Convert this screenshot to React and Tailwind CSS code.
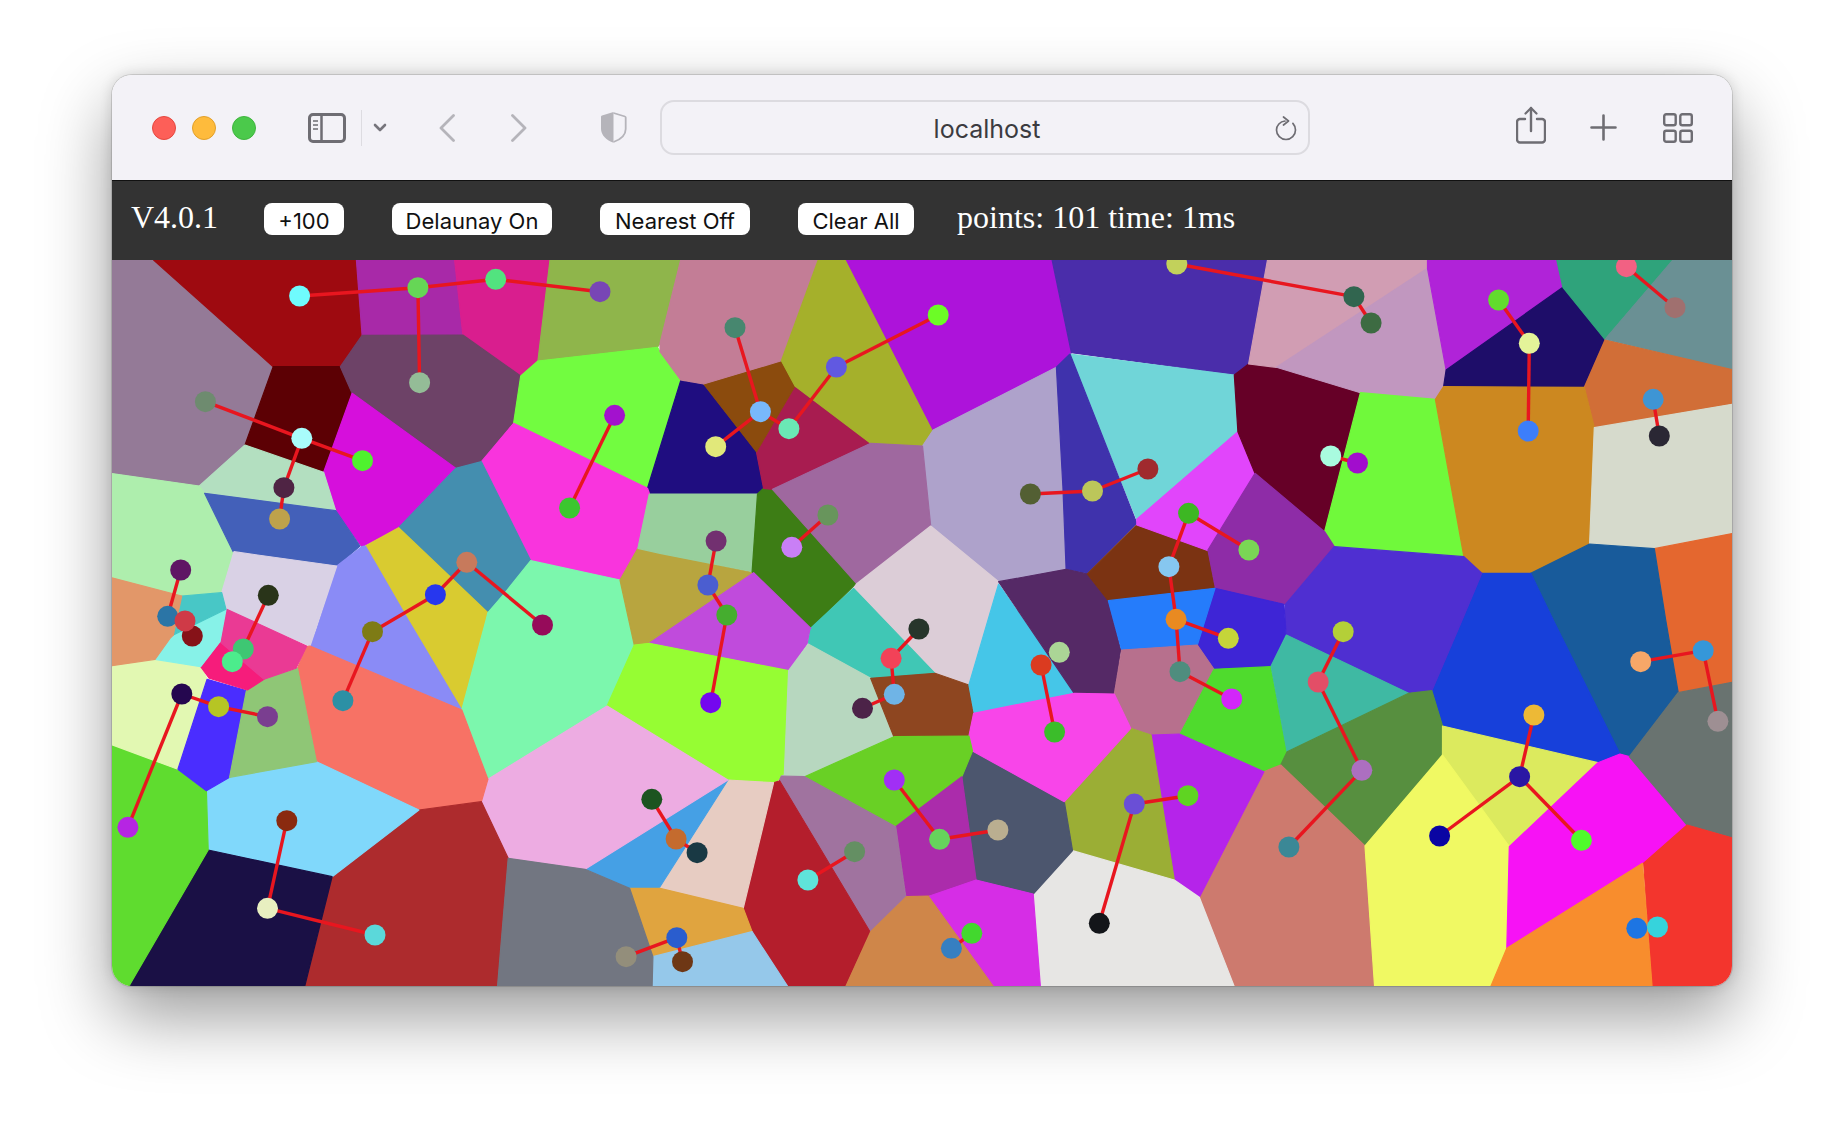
import React from "react";

// Coordinates below were read off crops of the picture: origin x, origin y, scale x, scale y
const CROPS = {
  A: [110, 260, 2.8, 3],
  B: [660, 260, 2.8, 3],
  C: [1180, 260, 2.8, 3],
  D: [110, 620, 2.8, 3],
  E: [660, 620, 2.8, 3],
  F: [1180, 620, 2.8, 3],
  G: [110, 540, 3, 3],
  H: [1080, 560, 3, 3],
};
const CANVAS_X = 112;
const CANVAS_Y = 260;

// ['A', x, y, x, y, 'B', x, y] => [[x, y], ...] in canvas pixels
const toPoints = (list) => {
  const out = [];
  let crop = CROPS.A;
  for (let i = 0; i < list.length; i++) {
    if (typeof list[i] === "string") {
      crop = CROPS[list[i]];
    } else {
      out.push([
        +(crop[0] + list[i] / crop[2] - CANVAS_X).toFixed(1),
        +(crop[1] + list[i + 1] / crop[3] - CANVAS_Y).toFixed(1),
      ]);
      i++;
    }
  }
  return out;
};

const CELLS = [
  ["#947a97", ["A", 0, 0, 122, 0, 457, 320, 378, 555, 250, 678, 0, 640]],
  ["#9e0a10", ["A", 122, 0, 690, 0, 706, 226, 645, 320, 457, 320]],
  ["#a829a8", ["A", 690, 0, 965, 0, 988, 225, 706, 226]],
  ["#d91e8e", ["A", 965, 0, 1232, 0, 1198, 303, 1150, 348, 988, 225]],
  ["#8fb54b", ["A", 1232, 0, "B", 58, 0, 0, 250, "A", 1533, 262, 1198, 303]],
  ["#5c0004", ["A", 457, 320, 645, 320, 678, 400, 598, 637, 378, 555]],
  ["#6d4267", ["A", 706, 226, 988, 225, 1150, 348, 1130, 490, 1040, 605, 968, 625, 678, 400, 645, 320]],
  ["#72fc40", ["A", 1150, 348, 1198, 303, 1533, 262, "B", 0, 275, 58, 360, "A", 1505, 685, 1130, 490]],
  ["#1f0d80", ["B", 58, 362, 122, 372, 270, 575, 290, 685, 273, 702, "A", 1505, 702, 1505, 685]],
  ["#d60fdc", ["A", 678, 400, 968, 625, 808, 803, 705, 860, 632, 752, 598, 637]],
  ["#f934dd", ["A", 1130, 490, 1505, 685, 1510, 700, 1478, 865, 1428, 960, 1178, 902, 1040, 605]],
  ["#b3dfc0", ["A", 378, 555, 598, 637, 632, 752, 265, 700, 250, 678]],
  ["#aeeead", ["A", 0, 640, 250, 678, 265, 700, 345, 875, 315, 998, 200, 1008, 0, 952]],
  ["#4360b9", ["A", 265, 700, 632, 752, 700, 858, 635, 918, 345, 875]],
  ["#448eaf", ["A", 968, 625, 1040, 605, 1178, 902, 1105, 1000, 1058, 1058, 808, 803]],
  ["#d9cb30", ["A", 715, 858, 808, 803, 1058, 1058, "D", 1053, 0, 985, 270, 835, 0]],
  ["#8a8bf6", ["A", 705, 860, 715, 858, "D", 835, 0, 985, 270, 560, 78, 578, 30, "A", 635, 918]],
  ["#d9d1e5", ["G", 372, 35, 680, 78, 600, 318, 350, 208, 335, 158]],
  ["#7cf7ad", ["A", 1058, 1058, 1105, 1000, 1178, 902, 1428, 960, "D", 1468, 75, 1392, 258, 1058, 478, 985, 270, 1053, 0]],
  ["#b8a53f", ["A", 1478, 865, "B", 0, 880, 262, 938, "D", 1510, 70, 1468, 75, "A", 1428, 960]],
  ["#98cf9d", ["A", 1510, 702, "B", 273, 702, 260, 935, 0, 880, "A", 1478, 865]],
  ["#3d7d15", ["B", 273, 702, 290, 685, 315, 688, 550, 970, 422, 1105, 262, 945, 258, 935]],
  ["#a81c50", ["B", 378, 378, 590, 550, 315, 688, 290, 685, 270, 575]],
  ["#8b4b0d", ["B", 122, 372, 340, 302, 378, 378, 270, 575]],
  ["#c37d96", ["B", 58, 0, 443, 0, 340, 302, 122, 372, 58, 360, 0, 275, 0, 250]],
  ["#a5b02b", ["B", 443, 0, 522, 0, 765, 510, 735, 558, 590, 550, 378, 378, 340, 302]],
  ["#ad13da", ["B", 522, 0, 1098, 0, 1152, 278, 1110, 322, 765, 510]],
  ["#4a2daa", ["B", 1098, 0, "C", 245, 0, 192, 312, 152, 345, 0, 322, "B", 1152, 278]],
  ["#70d5d8", ["B", 1148, 282, "C", 152, 345, 162, 515, "B", 1335, 778]],
  ["#aea2cb", ["B", 1110, 322, 1115, 330, 1128, 680, 1137, 928, 948, 965, 758, 798, 735, 558, 765, 510]],
  ["#3f32ac", ["B", 1110, 322, 1148, 282, 1335, 790, 1195, 940, 1137, 928, 1128, 680]],
  ["#9f689f", ["B", 315, 688, 590, 550, 735, 558, 758, 798, 550, 970]],
  ["#dccdd7", ["B", 542, 985, 550, 972, 758, 798, 948, 965, "E", 865, 192, 770, 160]],
  ["#40c7b5", ["B", 542, 985, "E", 770, 160, 590, 175, 415, 72, 420, 25, "B", 422, 1105]],
  ["#c04bdc", ["B", 262, 938, 422, 1105, "E", 420, 25, 412, 72, 360, 152, "D", 1510, 70]],
  ["#96fd33", ["D", 1468, 75, 1510, 70, "E", 360, 152, 348, 465, 320, 488, 190, 480, "D", 1392, 258]],
  ["#b7d7bf", ["E", 360, 152, 415, 72, 590, 175, 655, 350, 405, 470, 340, 468, 348, 465]],
  ["#8e4620", ["E", 590, 175, 770, 160, 865, 195, 878, 280, 865, 348, 655, 350]],
  ["#45c6e8", ["B", 948, 972, "E", 1160, 220, 880, 280, 865, 195]],
  ["#552966", ["B", 948, 965, 1137, 928, "H", 22, 42, 85, 122, 122, 270, 102, 402, "E", 1160, 220]],
  ["#7b3312", ["H", 22, 42, 85, 122, 405, 85, "B", 1535, 872, 1335, 795]],
  ["#e145fb", ["B", 1335, 778, "C", 162, 515, 210, 640, 78, 870, "B", 1535, 872, 1335, 795]],
  ["#660027", ["C", 152, 345, 192, 312, 270, 322, 505, 398, 405, 815, 210, 640, 162, 515]],
  ["#d19db3", ["C", 245, 0, 693, 0, 693, 25, 270, 322, 192, 312]],
  ["#c197bf", ["C", 693, 25, 745, 330, 738, 380, 715, 418, 505, 398, 270, 322]],
  ["#70f93b", ["C", 505, 398, 715, 418, 795, 890, 432, 860, 405, 815]],
  ["#8e2ca7", ["C", 210, 640, 405, 815, 432, 860, 295, 1033, 100, 988, 78, 870]],
  ["#b023d8", ["C", 693, 0, 1055, 0, 1072, 82, 745, 330, 693, 25]],
  ["#1e0d69", ["C", 1072, 82, 1190, 238, 1132, 380, 738, 380, 745, 330]],
  ["#2fa37b", ["C", 1055, 0, 1380, 0, 1190, 238, 1072, 82]],
  ["#6a9094", ["C", 1380, 0, 1550, 0, 1550, 332, 1190, 238]],
  ["#d16e37", ["C", 1190, 240, 1550, 330, 1550, 432, 1160, 503, 1132, 382]],
  ["#cc8820", ["C", 738, 380, 1132, 382, 1160, 503, 1147, 852, 982, 940, 845, 940, 795, 890, 715, 418]],
  ["#d6dacc", ["C", 1160, 503, 1550, 432, 1550, 820, 1328, 866, 1147, 852]],
  ["#e4672f", ["C", 1328, 866, 1550, 820, "F", 1550, 186, 1395, 218, 1360, 0]],
  ["#185b9b", ["C", 982, 940, 1147, 852, 1328, 866, "F", 1360, 0, 1395, 218, 1258, 410, 1232, 402, 1045, 0]],
  ["#1740da", ["C", 845, 940, 982, 940, "F", 1045, 0, 1232, 402, 1170, 428, 735, 318, 705, 212, 790, 0]],
  ["#4f2fd1", ["C", 432, 860, 795, 890, 845, 940, "F", 790, 0, 705, 212, 640, 220, 298, 45, 295, 0, "C", 295, 1033]],
  ["#3e25d6", ["H", 405, 85, 612, 133, 618, 222, 572, 320, 402, 328, 352, 255]],
  ["#257cfb", ["H", 85, 122, 405, 85, 352, 255, 125, 270]],
  ["#b7708d", ["H", 125, 270, 352, 255, 402, 328, "E", 1455, 342, 1375, 345, 1318, 325, 1272, 222]],
  ["#4fdb2d", ["H", 402, 328, 572, 320, "F", 300, 395, 282, 435, 235, 455, 0, 343]],
  ["#3fb9a3", ["F", 298, 45, 640, 220, 300, 395, 255, 138]],
  ["#578f3f", ["F", 300, 395, 640, 220, 705, 212, 735, 318, 733, 405, 518, 678, 282, 435]],
  ["#cd7a6e", ["F", 235, 455, 282, 435, 518, 678, 545, 1100, 152, 1100, 55, 830]],
  ["#dcea5e", ["F", 735, 318, 1170, 428, 922, 680, 735, 405]],
  ["#f0f963", ["F", 735, 405, 922, 680, 915, 985, 870, 1100, 545, 1100, 518, 678]],
  ["#f712f5", ["F", 922, 680, 1170, 428, 1232, 402, 1258, 410, 1420, 615, 1295, 730, 915, 985]],
  ["#697370", ["F", 1258, 410, 1395, 218, 1550, 186, 1550, 655, 1420, 615]],
  ["#f3352d", ["F", 1420, 615, 1550, 655, 1550, 1100, 1322, 1100, 1298, 730]],
  ["#f88d2d", ["F", 915, 985, 1295, 730, 1322, 1100, 870, 1100]],
  ["#b524ea", ["E", 1375, 345, 1455, 342, "F", 0, 343, 235, 455, 55, 830, "E", 1440, 780]],
  ["#9bae35", ["E", 1318, 325, 1375, 345, 1440, 780, 1155, 692, 1132, 545]],
  ["#e7e6e4", ["E", 1155, 692, 1440, 780, 1510, 832, "F", 152, 1100, "E", 1065, 1100, 1045, 822]],
  ["#4c566e", ["E", 875, 393, 1132, 545, 1155, 692, 1045, 822, 885, 780, 845, 470]],
  ["#f845e9", ["E", 878, 280, 1160, 220, 1272, 222, 1318, 325, 1132, 545, 875, 393, 865, 348]],
  ["#69d025", ["E", 405, 470, 655, 350, 865, 348, 875, 393, 845, 470, 660, 620]],
  ["#ab2cab", ["E", 845, 470, 885, 780, 755, 828, 690, 830, 660, 620]],
  ["#a0739f", ["E", 340, 468, 405, 470, 660, 620, 688, 830, 590, 935, 335, 480]],
  ["#b41e2c", ["E", 335, 482, 588, 935, 520, 1100, 358, 1100, 258, 935, 233, 865, 318, 488]],
  ["#e7ccc2", ["E", 190, 480, 318, 488, 233, 865, 0, 805]],
  ["#45a0e5", ["E", 190, 480, 0, 800, "D", 1535, 805, 1455, 805, 1330, 748]],
  ["#e0a43f", ["D", 1455, 805, "E", 0, 805, 233, 865, 258, 935, "D", 1520, 1010]],
  ["#95c8ea", ["D", 1520, 1010, "E", 258, 935, 358, 1100, "D", 1518, 1100]],
  ["#edace2", ["D", 1058, 478, 1392, 258, "E", 190, 480, "D", 1330, 748, 1115, 715, 1040, 545]],
  ["#f77265", ["D", 525, 145, 550, 80, 560, 78, 985, 270, 1058, 478, 1040, 545, 865, 570, 578, 425]],
  ["#ad2b2d", ["D", 865, 570, 1040, 545, 1115, 715, 1085, 1100, 545, 1100, 622, 770]],
  ["#727681", ["D", 1115, 715, 1330, 748, 1455, 805, 1520, 1010, 1518, 1100, 1085, 1100]],
  ["#80d8fb", ["D", 270, 512, 335, 472, 578, 425, 865, 570, 622, 770, 275, 690]],
  ["#1a1045", ["D", 275, 690, 622, 770, 545, 1100, 52, 1100]],
  ["#5fdc2f", ["D", 0, 372, 190, 448, 270, 512, 275, 690, 52, 1100, 0, 1100]],
  ["#e2f8b2", ["D", 0, 135, 125, 118, 255, 142, 272, 178, 190, 448, 0, 372]],
  ["#4a2dff", ["D", 272, 178, 382, 212, 335, 472, 270, 512, 190, 448]],
  ["#8fc676", ["D", 382, 212, 435, 175, 525, 145, 578, 425, 335, 472]],
  ["#f61c7b", ["G", 330, 305, 462, 418, 412, 450, 298, 415, 272, 380]],
  ["#ea3a94", ["G", 350, 208, 590, 318, 558, 385, 462, 418, 330, 305]],
  ["#87f2e8", ["G", 348, 208, 330, 305, 272, 380, 135, 358, 180, 295, 190, 285]],
  ["#48c7c6", ["G", 215, 168, 335, 158, 348, 208, 190, 285]],
  ["#e29769", ["G", 0, 112, 215, 168, 190, 285, 180, 295, 135, 358, 0, 378]],
  ["#cf8649", ["E", 590, 935, 690, 830, 755, 828, 938, 1100, 520, 1100]],
  ["#d62de6", ["E", 755, 828, 885, 780, 1045, 822, 1065, 1100, 938, 1100]],
];

const LINKS = [
  ["A", 531, 108, 862, 83], ["A", 862, 83, 1080, 58], ["A", 1080, 58, 1372, 95], ["A", 862, 83, 867, 368],
  ["A", 267, 425, 537, 535], ["A", 537, 535, 707, 602], ["A", 537, 535, 487, 683], ["A", 487, 683, 475, 777],
  ["A", 1413, 466, 1287, 744], ["G", 212, 90, 173, 229], ["G", 475, 166, 400, 327],
  ["A", 999, 907, 911, 1004], ["A", 911, 1004, "D", 735, 35], ["A", 999, 907, "D", 1211, 15], ["D", 735, 35, 652, 242],
  ["D", 201, 222, 304, 260], ["D", 304, 260, 441, 290], ["D", 201, 222, 50, 622], ["D", 495, 602, 441, 865], ["D", 441, 865, 742, 945],
  ["D", 1517, 538, "E", 45, 657], ["E", 45, 657, 104, 698], ["D", 1445, 1010, "E", 47, 953], ["E", 47, 953, 63, 1025],
  ["B", 210, 203, 281, 455], ["B", 281, 455, 156, 560], ["B", 281, 455, 361, 506], ["B", 361, 506, 494, 321], ["B", 494, 321, 779, 165],
  ["B", 470, 765, 369, 862], ["B", 157, 843, 134, 975], ["B", 134, 975, 187, 1065], ["B", 187, 1065, "E", 142, 248],
  ["B", 1037, 702, 1211, 693], ["B", 1211, 693, 1366, 627], ["B", 1480, 760, 1425, 920], ["B", 1425, 920, 1445, 1078],
  ["B", 1445, 1078, "H", 300, 335], ["B", 1445, 1078, "H", 445, 235], ["H", 300, 335, 455, 417], ["B", 1480, 760, "C", 193, 870],
  ["B", 1447, 12, "C", 487, 110], ["C", 487, 110, 535, 189],
  ["E", 725, 27, 647, 115], ["E", 647, 115, 656, 223], ["E", 656, 223, 567, 265], ["E", 1067, 135, 1105, 336],
  ["E", 656, 480, 783, 658], ["E", 783, 658, 946, 630], ["E", 1328, 552, 1478, 527], ["E", 1328, 552, 1230, 910],
  ["E", 873, 940, 816, 985], ["E", 545, 695, 414, 780],
  ["C", 1250, 20, 1386, 143], ["C", 892, 120, 978, 250], ["C", 978, 250, 975, 513], ["C", 1325, 418, 1342, 528], ["C", 422, 588, 497, 609],
  ["F", 457, 35, 387, 186], ["F", 387, 186, 509, 451], ["F", 509, 451, 305, 681], ["F", 991, 285, 951, 470], ["F", 951, 470, 727, 648],
  ["F", 951, 470, 1124, 661], ["F", 1290, 125, 1465, 92], ["F", 1465, 92, 1506, 304],
];

const DOTS = [
  ["#6ffbfd", "A", 531, 108], ["#66d656", "A", 862, 83], ["#52e37f", "A", 1080, 58], ["#7846b5", "A", 1372, 95],
  ["#6e8b6f", "A", 267, 425], ["#a9fcfb", "A", 537, 535], ["#4ff22e", "A", 707, 602], ["#94bc97", "A", 867, 368],
  ["#4f2444", "A", 487, 683], ["#bea24b", "A", 475, 777], ["#a312ce", "A", 1413, 466], ["#3bc72f", "A", 1287, 744],
  ["#5f1664", "G", 212, 90], ["#293419", "G", 475, 166], ["#c77a5c", "A", 999, 907], ["#2737ee", "A", 911, 1004],
  ["#7e7b15", "D", 735, 35], ["#960b5a", "D", 1211, 15],
  ["#2b75a6", "G", 173, 229], ["#861218", "G", 247, 288], ["#cf3a47", "G", 225, 243],
  ["#3ec773", "G", 400, 327], ["#4cec8c", "G", 367, 365],
  ["#25074f", "D", 201, 222], ["#b6c524", "D", 304, 260], ["#7a3e90", "D", 441, 290], ["#2c90a5", "D", 652, 242],
  ["#b625e3", "D", 50, 622], ["#8a2a0f", "D", 495, 602], ["#e8efc0", "D", 441, 865], ["#5bd8da", "D", 742, 945],
  ["#1c5420", "D", 1517, 538], ["#938e7b", "D", 1445, 1010],
  ["#c46b2e", "E", 45, 657], ["#193944", "E", 104, 698], ["#2a5dce", "E", 47, 953], ["#6e3715", "E", 63, 1025],
  ["#5fe4da", "E", 414, 780], ["#648f63", "E", 545, 695],
  ["#47876f", "B", 210, 203], ["#6159e1", "B", 494, 321], ["#6cfc26", "B", 779, 165], ["#78b8fb", "B", 281, 455],
  ["#6ae8b5", "B", 361, 506], ["#e1e87a", "B", 156, 560], ["#68955c", "B", 470, 765], ["#c97ff6", "B", 369, 862],
  ["#723070", "B", 157, 843], ["#4b5ed0", "B", 134, 975], ["#45ad2f", "B", 187, 1065],
  ["#535f33", "B", 1037, 702], ["#bcc65a", "B", 1211, 693], ["#a02a2e", "B", 1366, 627], ["#3db723", "B", 1480, 760],
  ["#86c7f0", "B", 1425, 920], ["#e98a21", "B", 1445, 1078], ["#c2d15b", "B", 1447, 12],
  ["#27352b", "E", 725, 27], ["#f24258", "E", 647, 115], ["#6fb4e6", "E", 656, 223], ["#4c2348", "E", 567, 265],
  ["#7407ef", "E", 142, 248], ["#db3b20", "E", 1067, 135], ["#abd596", "E", 1118, 97], ["#3bbd2a", "E", 1105, 336],
  ["#a12ff5", "E", 656, 480], ["#66d35c", "E", 783, 658], ["#baae90", "E", 946, 630], ["#6a4fd6", "E", 1328, 552],
  ["#5fd422", "E", 1478, 527], ["#131519", "E", 1230, 910], ["#42d82e", "E", 873, 940], ["#367fc1", "E", 816, 985],
  ["#4f8d7e", "H", 300, 335], ["#c5d539", "H", 445, 235], ["#d226f9", "H", 455, 417],
  ["#31654f", "C", 487, 110], ["#3d6b42", "C", 535, 189], ["#f26183", "C", 1250, 20], ["#a0706f", "C", 1386, 143],
  ["#62dc2d", "C", 892, 120], ["#e4f399", "C", 978, 250], ["#3c7efb", "C", 975, 513], ["#3e95d4", "C", 1325, 418],
  ["#2a2734", "C", 1342, 528], ["#a9fbdf", "C", 422, 588], ["#a20dcd", "C", 497, 609], ["#7ad655", "C", 193, 870],
  ["#b4cf38", "F", 457, 35], ["#e34e67", "F", 387, 186], ["#ac6fc0", "F", 509, 451], ["#3b8896", "F", 305, 681],
  ["#edb936", "F", 991, 285], ["#2a17a4", "F", 951, 470], ["#0a05a3", "F", 727, 648], ["#4ffc2b", "F", 1124, 661],
  ["#f6a768", "F", 1290, 125], ["#3597d9", "F", 1465, 92], ["#9e8f93", "F", 1506, 304],
  ["#1d75e3", "F", 1279, 925], ["#36d3dc", "F", 1337, 921],
];

const Voronoi = () => (
  <svg viewBox="0 0 1620 726" className="block w-[1620px] h-[726px]">
    {CELLS.map(([color, pts], i) => (
      <polygon
        key={i}
        points={toPoints(pts).map((p) => p.join(",")).join(" ")}
        fill={color}
        stroke={color}
        strokeWidth="1.2"
        strokeLinejoin="round"
      />
    ))}
    {LINKS.map((l, i) => {
      const [a, b] = toPoints(l);
      return <line key={i} x1={a[0]} y1={a[1]} x2={b[0]} y2={b[1]} stroke="#e8161f" strokeWidth="3.4" />;
    })}
    {DOTS.map(([color, ...pos], i) => {
      const [c] = toPoints(pos);
      return <circle key={i} cx={c[0]} cy={c[1]} r="10.5" fill={color} />;
    })}
  </svg>
);

const ToolbarButton = ({ label, className }) => (
  <button className={`h-8 bg-white rounded-lg text-[#111] text-[22px] leading-8 pt-[2px] font-['Inter',sans-serif] text-center ${className}`}>
    {label}
  </button>
);

export default function App() {
  return (
    <div className="min-h-[1134px] bg-white pl-[112px] pt-[75px]">
      <div className="w-[1620px] rounded-[20px] overflow-hidden shadow-[0_0_0_1px_rgba(0,0,0,0.12),0_30px_70px_rgba(0,0,0,0.4),0_0_14px_rgba(0,0,0,0.14)]">
        {/* Safari toolbar */}
        <div className="h-[106px] flex items-center bg-[#f3f2f7] border-b border-b-[#111] pl-[40px]">
          <div className="w-[24px] h-[24px] rounded-full bg-[#fd5f58] border border-[#e5483f]" />
          <div className="w-[24px] h-[24px] rounded-full bg-[#febb3c] border border-[#e2a02a] ml-[16px]" />
          <div className="w-[24px] h-[24px] rounded-full bg-[#4bc94b] border border-[#3fb53f] ml-[16px]" />

          <svg width="38" height="30" viewBox="0 0 38 30" fill="none" stroke="#6e6d73" className="ml-[52px]">
            <rect x="1.5" y="1.5" width="35" height="27" rx="3.5" strokeWidth="3" />
            <path d="M13.5 2v26" strokeWidth="2.5" />
            <path d="M5 8h5M5 12h5M5 16h5" strokeWidth="1.6" />
          </svg>
          <div className="w-[1px] h-[36px] bg-[#dddce1] ml-[15px]" />
          <svg width="14" height="10" viewBox="0 0 14 10" fill="none" stroke="#76757c" strokeWidth="2.6" strokeLinecap="round" strokeLinejoin="round" className="ml-[11px]">
            <path d="M2 2l5 5 5-5" />
          </svg>

          <svg width="16" height="28" viewBox="0 0 16 28" fill="none" stroke="#b5b4ba" strokeWidth="2.8" strokeLinecap="round" strokeLinejoin="round" className="ml-[52px]">
            <path d="M14.5 1.5L2 14l12.5 12.5" />
          </svg>
          <svg width="16" height="28" viewBox="0 0 16 28" fill="none" stroke="#b5b4ba" strokeWidth="2.8" strokeLinecap="round" strokeLinejoin="round" className="ml-[56px]">
            <path d="M1.5 1.5L14 14 1.5 26.5" />
          </svg>

          <svg width="27" height="33" viewBox="0 0 27 33" className="ml-[73px]">
            <path d="M13.5 1L2 4.5c-.6.2-1 .7-1 1.3v12c0 6.5 5.5 11.5 12.5 14z" fill="#b5b4ba" />
            <path d="M13.5 2L25 5.5c.4.1.7.5.7 1v11.5c0 6-5 10.5-12.2 13" fill="none" stroke="#b5b4ba" strokeWidth="1.8" />
          </svg>

          <div className="relative w-[650px] h-[55px] ml-[33px] rounded-[14px] border-2 border-[#dcdbe0] bg-[#f3f2f7] flex items-center justify-center">
            <span className="text-[25px] text-[#3b3b40] font-['Inter',sans-serif] pl-[4px] pt-[4px]">localhost</span>
            <svg width="22" height="25" viewBox="0 0 22 25" fill="none" stroke="#6e6d73" strokeWidth="1.7" strokeLinecap="round" strokeLinejoin="round" className="absolute right-[11px] top-[14px]">
              <path d="M10 5C5 5.5 1.5 9.5 1.5 14a9.5 9.5 0 0 0 19 0c0-2.6-1-4.8-2.6-6.6" />
              <path d="M8.5 1l5 4-5 4" />
            </svg>
          </div>

          <svg width="30" height="38" viewBox="0 0 30 38" fill="none" stroke="#6e6d73" strokeLinecap="round" strokeLinejoin="round" className="ml-[206px] -mt-[5px]">
            <path d="M9 13H4a3 3 0 0 0-3 3v17.5a3 3 0 0 0 3 3h22a3 3 0 0 0 3-3V16a3 3 0 0 0-3-3h-5" strokeWidth="2.4" />
            <path d="M15 25V2" strokeWidth="2.4" />
            <path d="M9.5 7.5L15 2l5.5 5.5" strokeWidth="2.2" />
          </svg>
          <svg width="27" height="27" viewBox="0 0 27 27" fill="none" stroke="#6e6d73" strokeWidth="2.6" strokeLinecap="round" className="ml-[44px]">
            <path d="M13.5 1.5v24M1.5 13.5h24" />
          </svg>
          <svg width="30" height="30" viewBox="0 0 30 30" fill="none" stroke="#6e6d73" strokeWidth="2.4" className="ml-[46px]">
            <rect x="1.2" y="1.2" width="11.5" height="11" rx="2" />
            <rect x="17.3" y="1.2" width="11.5" height="11" rx="2" />
            <rect x="1.2" y="17.8" width="11.5" height="11" rx="2" />
            <rect x="17.3" y="17.8" width="11.5" height="11" rx="2" />
          </svg>
        </div>

        {/* App header */}
        <div className="h-[79px] flex items-center bg-[#333333] text-white text-[32px] leading-none pl-[19px] pb-[4px] font-['Liberation_Serif',serif]">
          <span className="w-[86px] -mt-[4px]">V4.0.1</span>
          <ToolbarButton label="+100" className="w-[80px] ml-[47px]" />
          <ToolbarButton label="Delaunay On" className="w-[160px] ml-[48px]" />
          <ToolbarButton label="Nearest Off" className="w-[150px] ml-[48px]" />
          <ToolbarButton label="Clear All" className="w-[116px] ml-[48px]" />
          <span className="ml-[43px] -mt-[4px]">points: 101 time: 1ms</span>
        </div>

        <Voronoi />
      </div>
    </div>
  );
}
